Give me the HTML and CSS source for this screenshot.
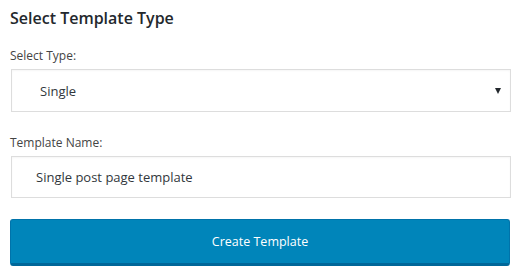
FILE: index.html
```html
<!DOCTYPE html>
<html>
    <head>
        <meta charset="UTF-8">
        <title>Select Template Type</title>
        <link rel="stylesheet" href="styles.css">
    </head>
    <body>
        <div class="panel">
            <h2 class="title">Select Template Type</h2>
            <div class="field">
                <label class="label">Select Type:</label>
                <div class="select-wrap">
                    <select class="select">
                        <option>Single</option>
                    </select>
                    <span class="arrow"></span>
                </div>
            </div>
            <div class="field field-last">
                <label class="label">Template Name:</label>
                <input class="input" type="text" value="Single post page template">
            </div>
            <button class="btn">Create Template</button>
        </div>
    </body>
</html>
```

FILE: styles.css
```css
*{
    padding:0;
    margin:0;
    box-sizing:border-box;
}
body{
    margin:0;
    background:#fff;
    font-family:"Open Sans","Noto Sans",sans-serif;
    color:#444;
}
.panel{
    width:521px;
    padding:7px 0 0 10px;
    display:flex;
    flex-direction:column;
}
.title{
    font-size:16px;
    font-weight:600;
    color:#23282d;
    line-height:22px;
    margin-bottom:19px;
}
.field{
    display:flex;
    flex-direction:column;
    margin-bottom:23px;
}
.field-last{
    margin-bottom:21px;
}
.label{
    font-size:12px;
    line-height:16px;
    color:#444;
    margin-bottom:5px;
}
.select-wrap{
    position:relative;
    margin-left:1px;
    width:500px;
}
.select{
    -webkit-appearance:none;
    appearance:none;
    width:500px;
    height:43px;
    border:1px solid #ddd;
    background:#fff;
    font-family:inherit;
    font-size:13px;
    color:#32373c;
    padding:0 24px 0 28px;
    outline:none;
    box-shadow:inset 0 1px 2px rgba(0,0,0,.04);
}
.arrow{
    position:absolute;
    right:10px;
    top:19px;
    width:0;
    height:0;
    border-left:3.5px solid transparent;
    border-right:3.5px solid transparent;
    border-top:6px solid #23282d;
}
.input{
    margin-left:1px;
    width:500px;
    height:42px;
    border:1px solid #ddd;
    background:#fff;
    font-family:inherit;
    font-size:13px;
    color:#32373c;
    padding:0 20px 0 24px;
    outline:none;
    box-shadow:inset 0 1px 2px rgba(0,0,0,.04);
}
.btn{
    width:500px;
    height:47px;
    background:#0085ba;
    border:1px solid #0073aa;
    border-bottom:3px solid #006799;
    border-radius:3px;
    color:#fff;
    font-family:inherit;
    font-size:12.5px;
    cursor:pointer;
}
```
